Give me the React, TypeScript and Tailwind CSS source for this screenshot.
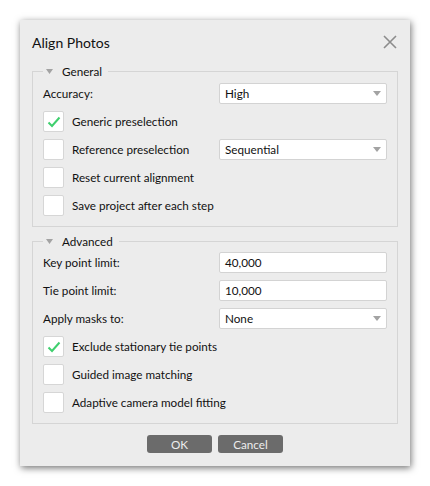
import React from "react";

const font = { fontFamily: 'Lato, "Segoe UI", sans-serif' };

function Arrow() {
  return (
    <svg width="8" height="5" viewBox="0 0 8 5" className="shrink-0">
      <path d="M0 0 L8 0 L4 5 Z" fill="#a3a3a3" />
    </svg>
  );
}

function Check() {
  return (
    <svg width="14" height="12" viewBox="0 0 14 12">
      <path d="M1.5 6.5 L5 10 L12.5 1.5" fill="none" stroke="#3fcf6e" strokeWidth="2" />
    </svg>
  );
}

function Combo({ value }: { value: string }) {
  return (
    <div className="flex h-[21px] w-[168px] items-center justify-between rounded-[2px] border border-[#d3d3d3] bg-white pl-[5px] pr-[5px] text-[11.7px] text-[#111]">
      <span className="pt-[1px]">{value}</span>
      <Arrow />
    </div>
  );
}

function Field({ value }: { value: string }) {
  return (
    <div className="flex h-[21px] w-[168px] items-center rounded-[2px] border border-[#d3d3d3] bg-white pl-[5px] text-[11.7px] text-[#111]">
      <span className="pt-[1px]">{value}</span>
    </div>
  );
}

function CheckRow({ label, checked, right }: { label: string; checked?: boolean; right?: React.ReactNode }) {
  return (
    <div className="flex h-[21px] items-center justify-between">
      <div className="flex items-center gap-[8px]">
        <div className="flex h-[21px] w-[21px] items-center justify-center rounded-[2px] border border-[#d6d6d6] bg-white">
          {checked && <Check />}
        </div>
        <span className="pt-[1px] text-[11.7px] text-[#111]">{label}</span>
      </div>
      {right}
    </div>
  );
}

function LabelRow({ label, children }: { label: string; children: React.ReactNode }) {
  return (
    <div className="flex h-[21px] items-center justify-between">
      <span className="pt-[1px] text-[11.7px] text-[#111]">{label}</span>
      {children}
    </div>
  );
}

function Group({ title, className, children }: { title: string; className?: string; children: React.ReactNode }) {
  return (
    <fieldset className={`border border-[#d5d5d5] px-[10px] ${className ?? ""}`}>
      <legend className="flex h-[16px] items-center pl-[3px] pr-[6px]">
        <svg width="7" height="5" viewBox="0 0 7 5" className="mr-[9px]">
          <path d="M0 0 L7 0 L3.5 5 Z" fill="#a3a3a3" />
        </svg>
        <span className="text-[11.7px] leading-[16px] text-[#111]">{title}</span>
      </legend>
      {children}
    </fieldset>
  );
}

export default function App() {
  return (
    <div className="h-[486px] w-[430px] bg-white pl-[20px] pt-[20px]" style={font}>
      <div className="flex h-[446px] w-[390px] flex-col bg-[#ececec] px-[12px] shadow-[1px_2px_7px_rgba(0,0,0,0.55)]">
        {/* Title */}
        <div className="flex h-[43px] items-start justify-between pt-[13px]">
          <h1 className="text-[14px] leading-[20px] text-[#111]">Align Photos</h1>
          <svg width="14" height="14" viewBox="0 0 14 14" className="mr-[1px] mt-[2px]">
            <path d="M1 1 L13 13 M13 1 L1 13" stroke="#8c8c8c" strokeWidth="1.6" />
          </svg>
        </div>

        {/* General */}
        <Group title="General" className="pb-[10px] pt-[4px]">
          <div className="flex flex-col gap-[7px]">
            <LabelRow label="Accuracy:">
              <Combo value="High" />
            </LabelRow>
            <CheckRow label="Generic preselection" checked />
            <CheckRow label="Reference preselection" right={<Combo value="Sequential" />} />
            <CheckRow label="Reset current alignment" />
            <CheckRow label="Save project after each step" />
          </div>
        </Group>

        {/* Advanced */}
        <Group title="Advanced" className="mt-[6px] pb-[10px] pt-[3px]">
          <div className="flex flex-col gap-[7px]">
            <LabelRow label="Key point limit:">
              <Field value="40,000" />
            </LabelRow>
            <LabelRow label="Tie point limit:">
              <Field value="10,000" />
            </LabelRow>
            <LabelRow label="Apply masks to:">
              <Combo value="None" />
            </LabelRow>
            <CheckRow label="Exclude stationary tie points" checked />
            <CheckRow label="Guided image matching" />
            <CheckRow label="Adaptive camera model fitting" />
          </div>
        </Group>

        {/* Buttons */}
        <div className="mt-[11px] flex justify-center gap-[6px]">
          <button className="h-[18px] w-[65px] rounded-[3px] bg-[#6b6b6b] text-[11.7px] leading-[18px] text-[#ededed]">OK</button>
          <button className="h-[18px] w-[65px] rounded-[3px] bg-[#6b6b6b] text-[11.7px] leading-[18px] text-[#ededed]">Cancel</button>
        </div>
      </div>
    </div>
  );
}
